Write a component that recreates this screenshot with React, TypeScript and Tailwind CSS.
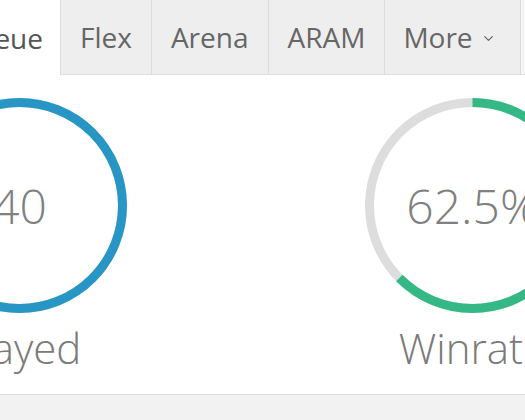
import { ChevronDown } from "lucide-react";

const tabs = ["Flex", "Arena", "ARAM"];

function Ring({ value, label, percent, color }: { value: string; label: string; percent: number; color: string }) {
  const r = 103;
  const c = 2 * Math.PI * r;
  return (
    <div className="flex w-[453px] shrink-0 flex-col items-center">
      <div className="relative h-[215px] w-[215px]">
        <svg width="215" height="215" viewBox="0 0 215 215" className="absolute inset-0">
          <circle cx="107.5" cy="107.5" r={r} fill="none" stroke="#dddddd" strokeWidth="9" />
          <circle
            cx="107.5"
            cy="107.5"
            r={r}
            fill="none"
            stroke={color}
            strokeWidth="9"
            strokeDasharray={`${(c * percent) / 100} ${c}`}
            transform="rotate(-90 107.5 107.5)"
          />
        </svg>
        <div className="absolute inset-0 flex items-center justify-center text-[48px] font-light text-[#808080]">
          {value}
        </div>
      </div>
      <div className="mt-[9px] text-[42px] font-light leading-[52px] text-[#7a7a7a]">{label}</div>
    </div>
  );
}

export default function App() {
  return (
    <div className="h-[420px] w-[525px] overflow-hidden bg-[#f2f2f2] font-['Open_Sans',sans-serif]">
      <div className="flex h-[395px] flex-col border-b border-[#dddddd] bg-white">
        <div className="flex h-[75px] shrink-0 text-[28px] text-[#666]">
          <div className="ml-[-140px] flex w-[200px] shrink-0 items-center justify-end bg-white pr-[17px] text-[#555]">
            Solo Queue
          </div>
          {tabs.map((t) => (
            <div
              key={t}
              className="flex shrink-0 items-center border-b border-l border-[#dddddd] bg-[#eeeeee] px-[19px]"
            >
              {t}
            </div>
          ))}
          <div className="flex w-[137px] shrink-0 items-center gap-[8px] border-x border-b border-[#dddddd] bg-[#eeeeee] pl-[18px]">
            More
            <ChevronDown className="mt-[3px] h-[15px] w-[15px]" strokeWidth={2} />
          </div>
          <div className="flex-1 border-b border-[#dddddd] bg-[#f5f5f5]" />
        </div>
        <div className="ml-[-207px] mt-[23px] flex">
          <Ring value="40" label="Played" percent={100} color="#2796c4" />
          <Ring value="62.5%" label="Winrate" percent={62.5} color="#34b986" />
        </div>
      </div>
    </div>
  );
}
